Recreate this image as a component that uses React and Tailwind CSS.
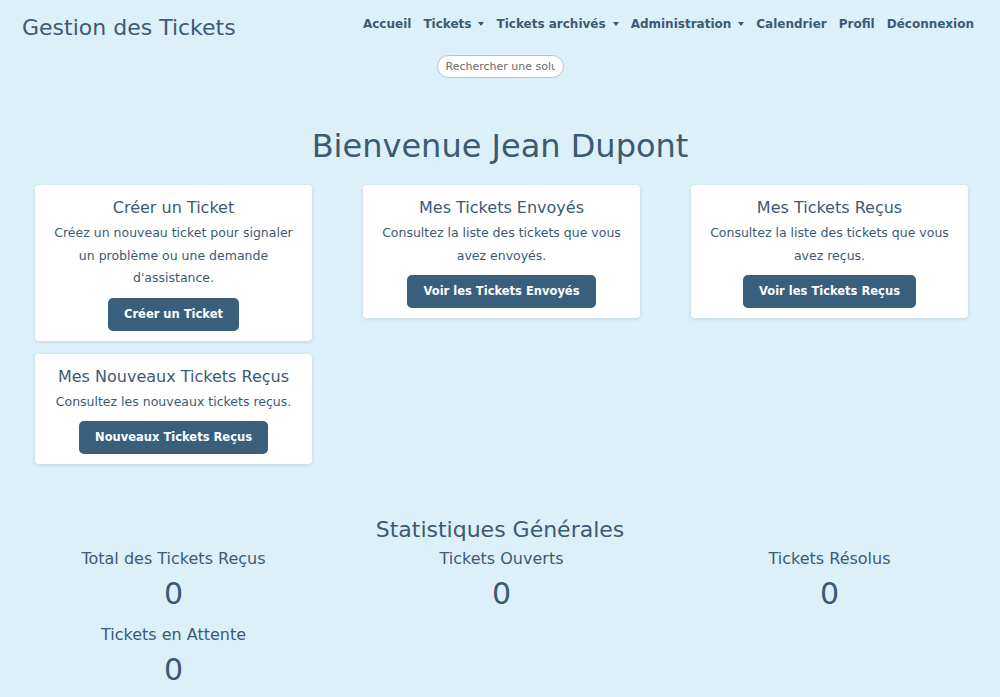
import { useState } from 'react'

const font = { fontFamily: '"DejaVu Sans", "Open Sans", sans-serif' }

function Caret() {
  return <span className="ml-[7px] inline-block align-middle border-x-[3.5px] border-t-[4px] border-x-transparent border-t-[#3d5a73]" />
}

const navItems = [
  { label: 'Accueil' },
  { label: 'Tickets', dropdown: true },
  { label: 'Tickets archivés', dropdown: true },
  { label: 'Administration', dropdown: true },
  { label: 'Calendrier' },
  { label: 'Profil' },
  { label: 'Déconnexion' },
]

const cards = [
  {
    title: 'Créer un Ticket',
    text: 'Créez un nouveau ticket pour signaler un problème ou une demande d\'assistance.',
    button: 'Créer un Ticket',
  },
  {
    title: 'Mes Tickets Envoyés',
    text: 'Consultez la liste des tickets que vous avez envoyés.',
    button: 'Voir les Tickets Envoyés',
  },
  {
    title: 'Mes Tickets Reçus',
    text: 'Consultez la liste des tickets que vous avez reçus.',
    button: 'Voir les Tickets Reçus',
  },
  {
    title: 'Mes Nouveaux Tickets Reçus',
    text: 'Consultez les nouveaux tickets reçus.',
    button: 'Nouveaux Tickets Reçus',
  },
]

const stats = [
  { label: 'Total des Tickets Reçus', value: 0 },
  { label: 'Tickets Ouverts', value: 0 },
  { label: 'Tickets Résolus', value: 0 },
  { label: 'Tickets en Attente', value: 0 },
]

export default function App() {
  const [search, setSearch] = useState('')

  return (
    <div className="min-h-screen bg-[#dcf0fa] text-[#3d5a73]" style={font}>

      {/* NAVBAR */}
      <div className="flex items-start justify-between pl-[22px] pr-[26px] pt-[13px]">
        <div className="text-[22px] leading-[30px]">Gestion des Tickets</div>
        <ul className="flex gap-[12px] pt-[2px] text-[12px] font-bold">
          {navItems.map((n) => (
            <li key={n.label} className="flex items-center whitespace-nowrap">
              {n.label}
              {n.dropdown && <Caret />}
            </li>
          ))}
        </ul>
      </div>

      {/* SEARCH */}
      <div className="flex justify-center pt-[12px]">
        <input
          value={search}
          onChange={(e) => setSearch(e.target.value)}
          placeholder="Rechercher une solution"
          className="h-[23px] w-[127px] rounded-full border border-[#b9c3cb] bg-white px-2 text-[11px] text-[#555] placeholder:text-[#6b6b6b] outline-none"
        />
      </div>

      {/* WELCOME */}
      <h1 className="mt-[48px] text-center text-[32px] leading-[40px]">Bienvenue Jean Dupont</h1>

      {/* CARDS */}
      <div className="mt-[19px] flex flex-wrap items-start gap-x-[51px] gap-y-[13px] pl-[35px]">
        {cards.map((c) => (
          <div
            key={c.title}
            className="flex w-[277px] flex-col items-center rounded-[4px] bg-white px-[12px] pt-[12px] pb-[10px] text-center shadow-[0_1px_4px_rgba(0,0,0,0.12)]"
          >
            <h2 className="text-[16px] leading-[22px]">{c.title}</h2>
            <p className="mt-[3px] text-[12.5px] leading-[22.5px]">{c.text}</p>
            <button className="mt-[8px] rounded-[5px] bg-[#3a5f7d] px-4 py-[8px] text-[11.5px] font-bold leading-[17px] text-white">
              {c.button}
            </button>
          </div>
        ))}
      </div>

      {/* STATS */}
      <h2 className="mt-[51px] text-center text-[22px] leading-[30px]">Statistiques Générales</h2>
      <div className="mt-[2px] grid grid-cols-[repeat(3,277px)] gap-x-[51px] pl-[35px]">
        {stats.map((s) => (
          <div key={s.label} className="flex flex-col items-center pb-[6px]">
            <div className="text-[16px] leading-[24px]">{s.label}</div>
            <div className="text-[30px] leading-[46px]">{s.value}</div>
          </div>
        ))}
      </div>

    </div>
  )
}
